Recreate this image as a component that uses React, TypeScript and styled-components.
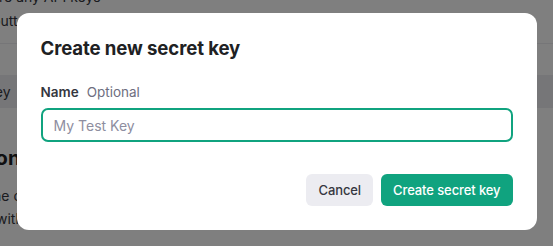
import styled, { createGlobalStyle } from 'styled-components';

const GlobalStyle = createGlobalStyle`
  * { box-sizing: border-box; }
  html, body { margin: 0; padding: 0; background: #fff; overflow: hidden; }
  body { font-family: Inter, "Noto Sans", "Liberation Sans", sans-serif; -webkit-font-smoothing: antialiased; }
`;

const Screen = styled.div`
  position: relative;
  width: 553px;
  height: 246px;
  overflow: hidden;
  background: #fff;
  color: #353740;
`;

/* page behind the dialog */
const PageColumn = styled.div`
  display: flex;
  flex-direction: column;
  margin-top: -13px;
`;

const PageText = styled.div<{ $shift: number; $gap?: number }>`
  margin-left: ${(p) => p.$shift}px;
  margin-top: ${(p) => p.$gap ?? 0}px;
  font-size: 14px;
  line-height: 20px;
  white-space: nowrap;
  color: #353740;
`;

const PageHeading = styled.div<{ $shift: number; $gap: number }>`
  margin-left: ${(p) => p.$shift}px;
  margin-top: ${(p) => p.$gap}px;
  font-size: 20px;
  line-height: 28px;
  font-weight: 700;
  white-space: nowrap;
  color: #202123;
`;

const Divider = styled.hr<{ $gap: number }>`
  margin: ${(p) => p.$gap}px 0 0;
  border: 0;
  border-top: 1px solid #ececf1;
`;

const TableRow = styled.div<{ $gap: number }>`
  margin-top: ${(p) => p.$gap}px;
  height: 33px;
  display: flex;
  align-items: center;
  background: #ececf1;
  font-size: 14px;
  white-space: nowrap;
`;

const RowCell = styled.span<{ $shift: number }>`
  margin-left: ${(p) => p.$shift}px;
`;

/* dialog */
const Overlay = styled.div`
  position: absolute;
  inset: 0;
  background: rgba(0, 0, 0, 0.5);
  display: flex;
  justify-content: center;
  align-items: flex-start;
  padding-top: 13px;
`;

const Dialog = styled.div`
  width: 520px;
  height: 217px;
  background: #fff;
  border-radius: 12px;
  padding: 21px 24px 24px;
  display: flex;
  flex-direction: column;
`;

const Title = styled.h2`
  margin: 0;
  font-size: 18.6px;
  line-height: 28px;
  font-weight: 700;
  color: #202123;
  letter-spacing: -0.1px;
`;

const Field = styled.div`
  margin-top: 20px;
  display: flex;
  flex-direction: column;
  gap: 6px;
`;

const Label = styled.label`
  display: flex;
  align-items: baseline;
  gap: 8px;
  font-size: 13.5px;
  line-height: 20px;
`;

const LabelName = styled.span`
  font-weight: 600;
  color: #353740;
`;

const LabelHint = styled.span`
  color: #6e6e80;
`;

const Input = styled.input`
  width: 100%;
  height: 34px;
  border: 2px solid #10a37f;
  border-radius: 7px;
  padding: 0 11px;
  font-family: inherit;
  font-size: 14px;
  color: #353740;
  outline: none;
  &::placeholder { color: #8e8ea0; }
`;

const Actions = styled.div`
  margin-top: auto;
  display: flex;
  justify-content: flex-end;
  gap: 8px;
`;

const Button = styled.button<{ $primary?: boolean }>`
  height: 32px;
  padding: 0 12px;
  border: 0;
  border-radius: 6px;
  font-family: inherit;
  font-size: 13px;
  font-weight: 500;
  letter-spacing: -0.1px;
  cursor: pointer;
  background: ${(p) => (p.$primary ? '#10a37f' : '#ececf1')};
  color: ${(p) => (p.$primary ? '#fff' : '#353740')};
`;

export default function App() {
  return (
    <Screen>
      <GlobalStyle />
      <PageColumn>
        <PageText $shift={-1}>re any API keys</PageText>
        <PageText $shift={-8} $gap={4}>button</PageText>
        <Divider $gap={12} />
        <TableRow $gap={31}>
          <RowCell $shift={-14}>Key</RowCell>
        </TableRow>
        <PageHeading $shift={-178} $gap={36}>Default organization</PageHeading>
        <PageText $shift={-7} $gap={14}>he organization used by default</PageText>
        <PageText $shift={-4} $gap={3}>with</PageText>
      </PageColumn>
      <Overlay>
        <Dialog role="dialog">
          <Title>Create new secret key</Title>
          <Field>
            <Label htmlFor="key-name">
              <LabelName>Name</LabelName>
              <LabelHint>Optional</LabelHint>
            </Label>
            <Input id="key-name" placeholder="My Test Key" />
          </Field>
          <Actions>
            <Button>Cancel</Button>
            <Button $primary>Create secret key</Button>
          </Actions>
        </Dialog>
      </Overlay>
    </Screen>
  );
}
